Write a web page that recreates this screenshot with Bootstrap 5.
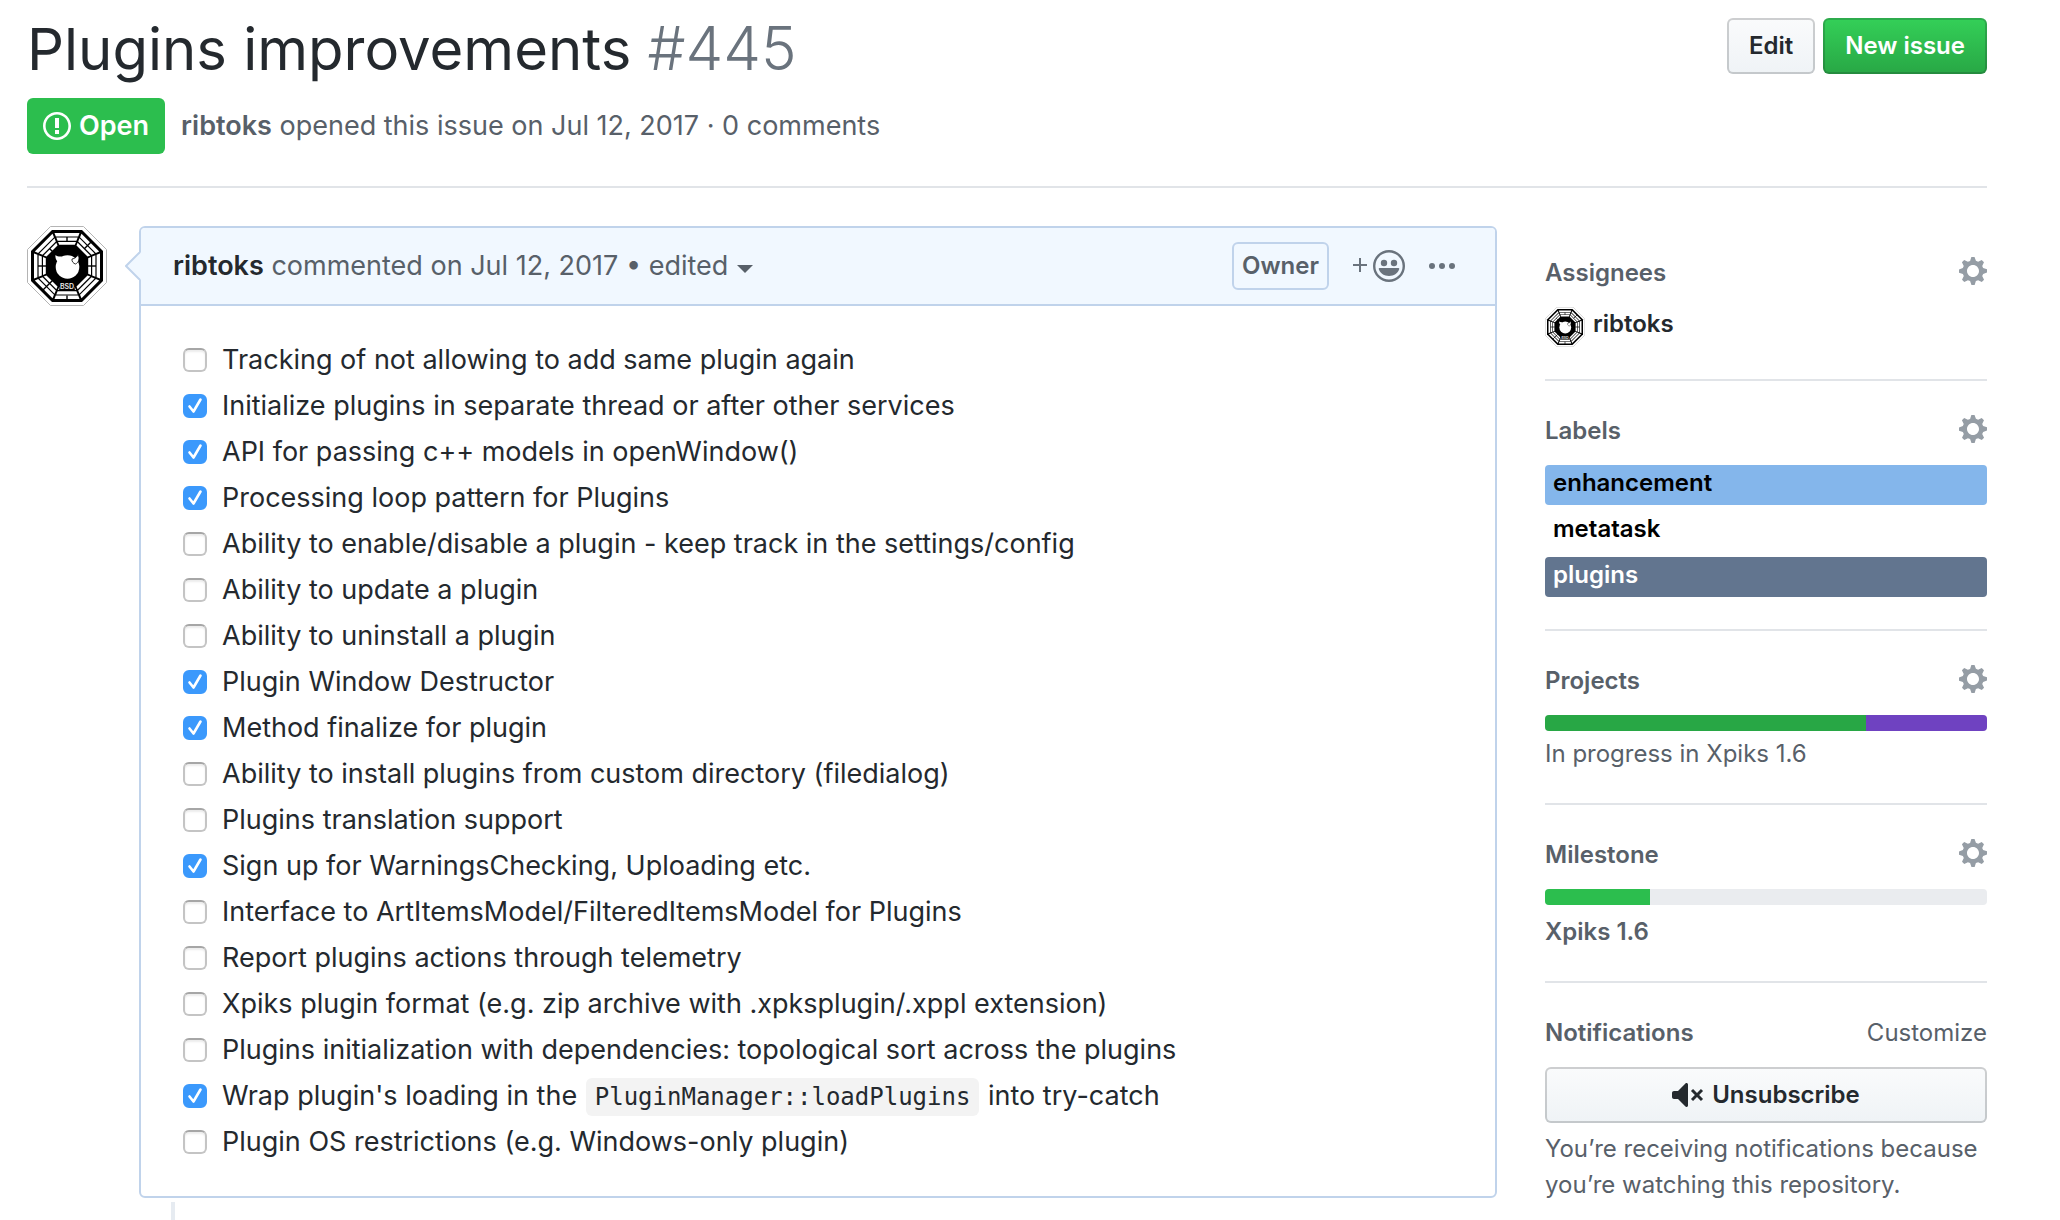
<!DOCTYPE html>
<html lang="en">
<head>
<meta charset="utf-8">
<meta name="viewport" content="width=device-width, initial-scale=1">
<title>Plugins improvements · Issue #445</title>
<link href="https://cdn.jsdelivr.net/npm/bootstrap@5.3.0/dist/css/bootstrap.min.css" rel="stylesheet">
<style>
  body { font-family: Inter, "Liberation Sans", sans-serif; font-size: 27px; line-height: 46px; color: #24292e; background: #fff; }
  a { color: inherit; text-decoration: none; }
  svg { display: block; flex: none; }
  .page { padding: 13px 73px 0 27px; }
  .soft { color: #586069; }
  .author { color: #24292e; }
  .issue-title { font-size: 58px; line-height: 72px; font-weight: 400; }
  .issue-number { font-size: 60px; line-height: 1; font-weight: 300; color: #6a737d; }
  .title-row { margin-bottom: 13px; }
  .title-actions { padding-top: 5px; }
  .gh-btn { height: 56px; padding: 0 20px; border: 2px solid rgba(27,31,35,.2); border-radius: 6px; font-size: 24px; font-weight: 600; line-height: 36px; color: #24292e; background: linear-gradient(#fafbfc, #eff3f6) border-box; }
  .gh-btn-green { color: #fff; background: linear-gradient(#34d058, #28a745) border-box; }
  .state-open { height: 56px; padding: 0 16px; border-radius: 6px; background: #2cbe4e; color: #fff; font-size: 27px; font-weight: 600; gap: 8px; }
  .meta-row { gap: 16px; padding-bottom: 32px; border-bottom: 2px solid #e1e4e8; margin-bottom: 38px; }
  .thread { gap: 32px; min-width: 0; }
  .columns { gap: 48px; }
  .comment-card { border: 2px solid #c0d3eb; border-radius: 6px; }
  .comment-card .card-header { height: 78px; padding: 0 40px 0 32px; background: #f1f8ff; border-bottom: 2px solid #c0d3eb; border-radius: 4px 4px 0 0; }
  .comment-arrow { position: absolute; left: -16px; top: 24px; }
  .comment-card .card-body { padding: 31px 42px; }
  .edited-btn { padding: 0; border: 0; background: none; color: inherit; }
  .edited-btn::after { content: ""; display: inline-block; margin-left: 9px; vertical-align: 2px; border: 8px solid transparent; border-top-color: currentColor; border-bottom: 0; }
  .owner-tag { height: 48px; padding: 0 8px; border: 2px solid #c0d3eb; border-radius: 6px; font-size: 24px; font-weight: 600; }
  .header-tools { gap: 24px; color: #6a737d; }
  .icon-btn { padding: 0; border: 0; background: none; color: inherit; }
  .task { gap: 15px; }
  .task .form-check-input { width: 24px; height: 24px; margin: 0; flex: none; border: 2px solid #c4c4c4; border-top-color: #a6a6a6; border-radius: 6px; box-shadow: inset 0 2px 2px #ececec; }
  .task .form-check-input:checked { background-color: #3b99fc; border-color: #3b99fc; background-size: 24px 24px; box-shadow: none; background-image: url("data:image/svg+xml,%3Csvg xmlns='http://www.w3.org/2000/svg' viewBox='0 0 24 24'%3E%3Cpath d='M6.500 12.500l4 5 7-12' fill='none' stroke='%23fff' stroke-width='2.600' stroke-linecap='round' stroke-linejoin='round'/%3E%3C/svg%3E"); }
  .task code { padding: 5px 9px; margin: 0 1px; border-radius: 6px; background: #f3f3f3; color: inherit; font: 24px/1 "DejaVu Sans Mono", monospace; }
  .timeline-tail { width: 4px; height: 18px; margin: 4px 0 0 32px; background: #e6ebf1; }
  .issue-sidebar { flex: 0 0 442px; font-size: 24px; line-height: 34px; padding-top: 31px; }
  .side-block { padding-bottom: 32px; border-bottom: 2px solid #e1e4e8; margin-bottom: 34px; }
  .side-block:last-child { border: 0; margin: 0; padding: 0; }
  .side-head { margin-bottom: 18px; line-height: 32px; color: #586069; }
  .side-head h2 { font-size: 24px; line-height: 32px; font-weight: 600; margin: 0; }
  .side-head .icon-btn { color: #959da5; }
  .issue-label { height: 40px; line-height: 36px; padding: 0 8px; border-radius: 4px; font-weight: 600; color: #000; }
  .label-list { gap: 6px; }
  .label-enhancement { background: #84b6eb; }
  .label-plugins { background: #62758f; color: #fff; }
  .side-progress { height: 16px; border-radius: 4px; background: #eaecef; }
  .bar-green { background: #28a745; }
  .bar-purple { background: #6f42c1; }
  .bar-lime { background: #2cbe4e; }
  .project-caption { margin-top: 6px; }
  .milestone-caption { margin-top: 10px; }
  .note { line-height: 36px; margin: 8px 0 0; }
</style>
<script src="https://cdn.jsdelivr.net/npm/bootstrap@5.3.0/dist/js/bootstrap.bundle.min.js"></script>
</head>
<body>
<div class="page">
  <header>
    <div class="title-row d-flex justify-content-between align-items-start">
      <h1 class="issue-title m-0">Plugins improvements <span class="issue-number">#445</span></h1>
      <div class="title-actions d-flex gap-2">
        <button type="button" class="btn gh-btn">Edit</button>
        <button type="button" class="btn gh-btn gh-btn-green">New issue</button>
      </div>
    </div>
    <div class="meta-row d-flex align-items-center soft">
      <span class="state-open d-inline-flex align-items-center">
        <svg width="28" height="28" viewBox="0 1 14 14" aria-hidden="true"><path fill="#fff" fill-rule="evenodd" d="M7 2.300c3.140 0 5.700 2.560 5.700 5.700s-2.560 5.700-5.700 5.700A5.710 5.710 0 0 1 1.300 8c0-3.140 2.560-5.700 5.700-5.700zM7 1C3.140 1 0 4.140 0 8s3.140 7 7 7 7-3.140 7-7-3.140-7-7-7zm1 3H6v5h2V4zm0 6H6v2h2v-2z"/></svg>
        Open
      </span>
      <span><a href="#" class="fw-semibold">ribtoks</a> opened this issue on Jul 12, 2017 · 0 comments</span>
    </div>
  </header>

  <div class="columns d-flex align-items-start">
    <main class="thread d-flex align-items-start flex-grow-1">
      <a href="#" aria-label="ribtoks">
        <svg width="80" height="80" viewBox="0 0 80 80">
          <g id="avatar">
            <path d="M23.500 .5h33L79.500 23.500v33L56.500 79.500h-33L.5 56.500v-33z" fill="#fff" stroke="#b4b4b4"/>
            <path d="M25 4h30l21 21v30L55 76H25L4 55V25z" fill="#000"/>
            <g fill="#fff">
              <g id="tri"><path d="M27.500 7h25l-1.300 3.400H28.800z"/><path d="M29.300 11.600h21.400l-1.300 3.200H30.600z"/><path d="M31 16h18l-1.200 2.800H32.200z"/></g>
              <use href="#tri" transform="rotate(45 40 40)"/><use href="#tri" transform="rotate(90 40 40)"/>
              <use href="#tri" transform="rotate(135 40 40)"/><use href="#tri" transform="rotate(180 40 40)"/>
              <use href="#tri" transform="rotate(225 40 40)"/><use href="#tri" transform="rotate(270 40 40)"/>
              <use href="#tri" transform="rotate(315 40 40)"/>
            </g>
            <g stroke="#000" stroke-width="1.400">
              <path d="M40 11v4.500"/>
              <path d="M40 6v9.500" transform="rotate(45 40 40)"/>
              <path d="M40 11v8.500" transform="rotate(90 40 40)"/>
              <path d="M40 6v4.500" transform="rotate(180 40 40)"/>
              <path d="M40 6v13.500" transform="rotate(225 40 40)"/>
              <path d="M40 11v8.500" transform="rotate(270 40 40)"/>
              <path d="M40 15.500v4" transform="rotate(315 40 40)"/>
            </g>
            <circle cx="40.500" cy="41" r="11.800" fill="#fff"/>
            <path d="M31 36c-2-2-3-4.500-2.500-7 1.500 1.500 4 1.800 6.500 1.500z" fill="#fff"/>
            <path d="M45 33c3-.5 5-2 6-4.500 2 4 .8 8-2.500 9.500-2-.5-4-2.500-3.500-5z" fill="#fff" stroke="#000" stroke-width=".8"/>
            <path d="M33 56.500h14l1 8H32z" fill="#000"/>
            <text x="40" y="63" font-family="Inter, sans-serif" font-size="7" font-weight="600" text-anchor="middle" fill="#e8e8e8">BSD</text>
          </g>
        </svg>
      </a>
      <div class="flex-grow-1">
        <article class="card comment-card">
          <svg class="comment-arrow" width="18" height="28" viewBox="0 0 18 28" aria-hidden="true"><path d="M18 0h-2L1 14l15 14h2z" fill="#f1f8ff"/><path d="M15 0L1 14l14 14" fill="none" stroke="#c0d3eb" stroke-width="2"/></svg>
          <div class="card-header d-flex align-items-center justify-content-between">
            <div class="soft"><a href="#" class="fw-semibold author">ribtoks</a> commented on <a href="#">Jul 12, 2017</a> • <button type="button" class="edited-btn">edited</button></div>
            <div class="header-tools d-flex align-items-center">
              <span class="owner-tag soft d-inline-flex align-items-center">Owner</span>
              <button type="button" class="icon-btn" aria-label="Add your reaction">
                <svg width="52" height="32" viewBox="0 0 52 32"><path d="M0 15h14M7 8v14" stroke="currentColor" stroke-width="2"/><circle cx="36" cy="16" r="14.800" fill="none" stroke="currentColor" stroke-width="2.400"/><circle cx="31" cy="13" r="3.200" fill="currentColor"/><circle cx="41" cy="13" r="3.200" fill="currentColor"/><path d="M26.500 18h19c1 0 .8 1 .5 1.800-1.500 3.700-5 6.200-10 6.200s-8.500-2.500-10-6.200c-.3-.8-.5-1.800.5-1.800z" fill="currentColor"/></svg>
              </button>
              <button type="button" class="icon-btn" aria-label="More options">
                <svg width="26" height="6" viewBox="0 0 26 6"><g fill="currentColor"><circle cx="3" cy="3" r="3"/><circle cx="13" cy="3" r="3"/><circle cx="23" cy="3" r="3"/></g></svg>
              </button>
            </div>
          </div>
          <div class="card-body">
            <ul class="list-unstyled m-0">
              <li class="task d-flex align-items-center"><input class="form-check-input" type="checkbox" id="t1"><label for="t1">Tracking of not allowing to add same plugin again</label></li>
              <li class="task d-flex align-items-center"><input class="form-check-input" type="checkbox" id="t2" checked><label for="t2">Initialize plugins in separate thread or after other services</label></li>
              <li class="task d-flex align-items-center"><input class="form-check-input" type="checkbox" id="t3" checked><label for="t3">API for passing c++ models in openWindow()</label></li>
              <li class="task d-flex align-items-center"><input class="form-check-input" type="checkbox" id="t4" checked><label for="t4">Processing loop pattern for Plugins</label></li>
              <li class="task d-flex align-items-center"><input class="form-check-input" type="checkbox" id="t5"><label for="t5">Ability to enable/disable a plugin - keep track in the settings/config</label></li>
              <li class="task d-flex align-items-center"><input class="form-check-input" type="checkbox" id="t6"><label for="t6">Ability to update a plugin</label></li>
              <li class="task d-flex align-items-center"><input class="form-check-input" type="checkbox" id="t7"><label for="t7">Ability to uninstall a plugin</label></li>
              <li class="task d-flex align-items-center"><input class="form-check-input" type="checkbox" id="t8" checked><label for="t8">Plugin Window Destructor</label></li>
              <li class="task d-flex align-items-center"><input class="form-check-input" type="checkbox" id="t9" checked><label for="t9">Method finalize for plugin</label></li>
              <li class="task d-flex align-items-center"><input class="form-check-input" type="checkbox" id="t10"><label for="t10">Ability to install plugins from custom directory (filedialog)</label></li>
              <li class="task d-flex align-items-center"><input class="form-check-input" type="checkbox" id="t11"><label for="t11">Plugins translation support</label></li>
              <li class="task d-flex align-items-center"><input class="form-check-input" type="checkbox" id="t12" checked><label for="t12">Sign up for WarningsChecking, Uploading etc.</label></li>
              <li class="task d-flex align-items-center"><input class="form-check-input" type="checkbox" id="t13"><label for="t13">Interface to ArtItemsModel/FilteredItemsModel for Plugins</label></li>
              <li class="task d-flex align-items-center"><input class="form-check-input" type="checkbox" id="t14"><label for="t14">Report plugins actions through telemetry</label></li>
              <li class="task d-flex align-items-center"><input class="form-check-input" type="checkbox" id="t15"><label for="t15">Xpiks plugin format (e.g. zip archive with .xpksplugin/.xppl extension)</label></li>
              <li class="task d-flex align-items-center"><input class="form-check-input" type="checkbox" id="t16"><label for="t16">Plugins initialization with dependencies: topological sort across the plugins</label></li>
              <li class="task d-flex align-items-center"><input class="form-check-input" type="checkbox" id="t17" checked><label for="t17">Wrap plugin's loading in the <code>PluginManager::loadPlugins</code> into try-catch</label></li>
              <li class="task d-flex align-items-center"><input class="form-check-input" type="checkbox" id="t18"><label for="t18">Plugin OS restrictions (e.g. Windows-only plugin)</label></li>
            </ul>
          </div>
        </article>
        <div class="timeline-tail"></div>
      </div>
    </main>

    <aside class="issue-sidebar">
      <section class="side-block">
        <div class="side-head d-flex justify-content-between align-items-start"><h2>Assignees</h2><button type="button" class="icon-btn" aria-label="Edit assignees"><svg width="28" height="28" viewBox="0 1 14 14"><path id="gear" fill="currentColor" fill-rule="evenodd" d="M14 8.770v-1.600l-1.940-.64-.45-1.090.88-1.840-1.130-1.130-1.810.91-1.090-.45-.69-1.920h-1.600l-.63 1.940-1.110.45-1.840-.88-1.130 1.130.91 1.810-.45 1.090L0 7.230v1.590l1.940.64.45 1.090-.88 1.840 1.130 1.130 1.810-.91 1.090.45.69 1.920h1.590l.63-1.940 1.110-.45 1.840.88 1.130-1.130-.92-1.810.47-1.090L14 8.750v.02zM7 11c-1.660 0-3-1.340-3-3s1.340-3 3-3 3 1.340 3 3-1.340 3-3 3z"/></svg></button></div>
        <a href="#" class="d-flex align-items-start fw-semibold"><svg width="40" height="40" viewBox="0 0 80 80" class="me-2" aria-hidden="true"><use href="#avatar"/></svg>ribtoks</a>
      </section>
      <section class="side-block">
        <div class="side-head d-flex justify-content-between align-items-start"><h2>Labels</h2><button type="button" class="icon-btn" aria-label="Edit labels"><svg width="28" height="28" viewBox="0 1 14 14"><use href="#gear"/></svg></button></div>
        <div class="label-list d-flex flex-column">
          <a href="#" class="issue-label label-enhancement">enhancement</a>
          <a href="#" class="issue-label">metatask</a>
          <a href="#" class="issue-label label-plugins">plugins</a>
        </div>
      </section>
      <section class="side-block">
        <div class="side-head d-flex justify-content-between align-items-start"><h2>Projects</h2><button type="button" class="icon-btn" aria-label="Edit projects"><svg width="28" height="28" viewBox="0 1 14 14"><use href="#gear"/></svg></button></div>
        <div class="progress side-progress"><div class="progress-bar bar-green" style="width:72.6%"></div><div class="progress-bar bar-purple" style="width:27.4%"></div></div>
        <div class="soft project-caption">In progress in <a href="#">Xpiks 1.6</a></div>
      </section>
      <section class="side-block">
        <div class="side-head d-flex justify-content-between align-items-start"><h2>Milestone</h2><button type="button" class="icon-btn" aria-label="Edit milestone"><svg width="28" height="28" viewBox="0 1 14 14"><use href="#gear"/></svg></button></div>
        <div class="progress side-progress"><div class="progress-bar bar-lime" style="width:23.8%"></div></div>
        <a href="#" class="soft fw-semibold d-block milestone-caption">Xpiks 1.6</a>
      </section>
      <section class="side-block">
        <div class="side-head d-flex justify-content-between align-items-start"><h2>Notifications</h2><a href="#">Customize</a></div>
        <button type="button" class="btn gh-btn w-100 d-flex align-items-center justify-content-center gap-2">
          <svg width="32" height="32" viewBox="0 0 16 16" aria-hidden="true"><path fill="currentColor" fill-rule="evenodd" d="M8 2.810v10.380c0 .67-.81 1-1.280.53L3 10H1c-.55 0-1-.45-1-1V7c0-.55.45-1 1-1h2l3.720-3.720C7.190 1.810 8 2.140 8 2.810zm7.530 3.220l-1.060-1.060-1.970 1.970-1.970-1.970-1.060 1.060L11.440 8 9.470 9.970l1.060 1.060 1.970-1.970 1.970 1.970 1.060-1.060L13.560 8l1.970-1.970z"/></svg>
          Unsubscribe
        </button>
        <p class="soft note">You’re receiving notifications because you’re watching this repository.</p>
      </section>
    </aside>
  </div>
</div>
</body>
</html>
